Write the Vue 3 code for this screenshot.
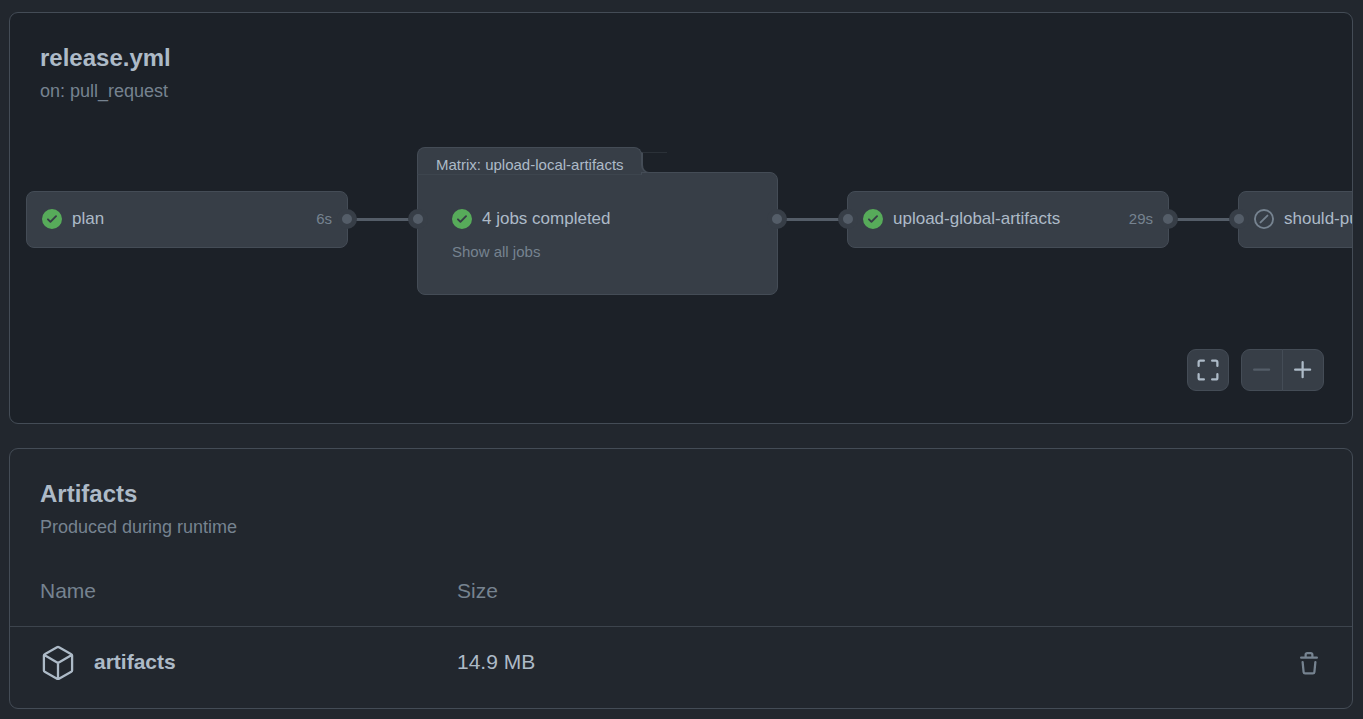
<script setup>
const check =
  'M8 16A8 8 0 1 1 8 0a8 8 0 0 1 0 16Zm3.78-9.72a.751.751 0 0 0-.018-1.042.751.751 0 0 0-1.042-.018L6.75 9.19 5.28 7.72a.751.751 0 0 0-1.042.018.751.751 0 0 0-.018 1.042l2 2a.75.75 0 0 0 1.06 0Z'
const skip =
  'M8 0a8 8 0 1 1 0 16A8 8 0 0 1 8 0ZM1.5 8a6.5 6.5 0 1 0 13 0 6.5 6.5 0 0 0-13 0Zm9.78-2.22-5.5 5.5a.749.749 0 0 1-1.275-.326.749.749 0 0 1 .215-.734l5.5-5.5a.751.751 0 0 1 1.042.018.751.751 0 0 1 .018 1.042Z'
const jobs = [
  { type: 'job', name: 'plan', time: '6s', icon: check, next: true },
  { type: 'matrix', name: '4 jobs completed', title: 'Matrix: upload-local-artifacts', icon: check, prev: true, next: true },
  { type: 'job', name: 'upload-global-artifacts', time: '29s', icon: check, prev: true, next: true },
  { type: 'job', name: 'should-publish', time: '', icon: skip, prev: true, skipped: true },
]
const artifacts = [{ name: 'artifacts', size: '14.9 MB' }]
</script>

<template>
  <main class="page">
    <section class="card graph-card">
      <header class="head">
        <h2>release.yml</h2>
        <p>on: pull_request</p>
      </header>
      <div class="graph">
        <template v-for="(job, i) in jobs" :key="job.name">
          <div v-if="i > 0" class="edge"></div>
          <div class="node" :class="job.type">
            <div v-if="job.title" class="tab">{{ job.title }}</div>
            <div class="body">
              <span v-if="job.prev" class="port left"></span>
              <span v-if="job.next" class="port right"></span>
              <div class="row">
                <svg class="status" :class="{ skipped: job.skipped }" viewBox="0 0 16 16" aria-hidden="true">
                  <path :d="job.icon" />
                </svg>
                <span class="name">{{ job.name }}</span>
                <span v-if="job.time" class="time">{{ job.time }}</span>
              </div>
              <button v-if="job.title" class="show" type="button">Show all jobs</button>
            </div>
          </div>
        </template>
      </div>
      <div class="controls">
        <button class="control full" type="button" aria-label="Full screen">
          <svg viewBox="0 0 16 16" aria-hidden="true">
            <path d="M1.75 10a.75.75 0 0 1 .75.75v2.5c0 .138.112.25.25.25h2.5a.75.75 0 0 1 0 1.5h-2.5A1.75 1.75 0 0 1 1 13.25v-2.5a.75.75 0 0 1 .75-.75Zm12.5 0a.75.75 0 0 1 .75.75v2.5A1.75 1.75 0 0 1 13.25 15h-2.5a.75.75 0 0 1 0-1.5h2.5a.25.25 0 0 0 .25-.25v-2.5a.75.75 0 0 1 .75-.75ZM2.75 2.5a.25.25 0 0 0-.25.25v2.5a.75.75 0 0 1-1.5 0v-2.5C1 1.784 1.784 1 2.75 1h2.5a.75.75 0 0 1 0 1.5h-2.5ZM10 1.75a.75.75 0 0 1 .75-.75h2.5c.966 0 1.75.784 1.75 1.75v2.5a.75.75 0 0 1-1.5 0v-2.5a.25.25 0 0 0-.25-.25h-2.5a.75.75 0 0 1-.75-.75Z" />
          </svg>
        </button>
        <div class="zoom">
          <button class="control out" type="button" aria-label="Zoom out" disabled>
            <svg viewBox="0 0 16 16" aria-hidden="true">
              <path d="M2 7.75A.75.75 0 0 1 2.75 7h10a.75.75 0 0 1 0 1.5h-10A.75.75 0 0 1 2 7.75Z" />
            </svg>
          </button>
          <button class="control in" type="button" aria-label="Zoom in">
            <svg viewBox="0 0 16 16" aria-hidden="true">
              <path d="M7.75 2a.75.75 0 0 1 .75.75V7h4.25a.75.75 0 0 1 0 1.5H8.5v4.25a.75.75 0 0 1-1.5 0V8.5H2.75a.75.75 0 0 1 0-1.5H7V2.75A.75.75 0 0 1 7.75 2Z" />
            </svg>
          </button>
        </div>
      </div>
    </section>

    <section class="card">
      <header class="head">
        <h2>Artifacts</h2>
        <p>Produced during runtime</p>
      </header>
      <table>
        <thead>
          <tr>
            <th class="col-name" scope="col">Name</th>
            <th scope="col">Size</th>
            <td class="col-action"></td>
          </tr>
        </thead>
        <tbody>
          <tr v-for="item in artifacts" :key="item.name">
            <td>
              <div class="artifact">
                <svg class="cube" viewBox="0 0 36 36" aria-hidden="true">
                  <path d="M17 3.300a2 2 0 0 1 2 0L31.300 10.300a1.500 1.500 0 0 1 .8 1.400V26.300a1.500 1.500 0 0 1-.8 1.400L19 34.700a2 2 0 0 1-2 0L4.700 27.700a1.500 1.500 0 0 1-.8-1.400V11.700a1.500 1.500 0 0 1 .8-1.400ZM4.300 11 18 19 31.700 11M18 19V34.500" />
                </svg>
                <a href="#">{{ item.name }}</a>
              </div>
            </td>
            <td>{{ item.size }}</td>
            <td class="action">
              <button class="delete" type="button" aria-label="Delete artifact">
                <svg viewBox="0 0 16 16" aria-hidden="true">
                  <path d="M11 1.75V3h2.25a.75.75 0 0 1 0 1.5H2.75a.75.75 0 0 1 0-1.5H5V1.75C5 .784 5.784 0 6.75 0h2.5C10.216 0 11 .784 11 1.75ZM4.496 6.675l.66 6.6a.25.25 0 0 0 .249.225h5.19a.25.25 0 0 0 .249-.225l.66-6.6a.75.75 0 0 1 1.492.149l-.66 6.6A1.748 1.748 0 0 1 10.595 15h-5.19a1.75 1.75 0 0 1-1.741-1.575l-.66-6.6a.75.75 0 1 1 1.492-.15ZM6.5 1.75V3h3V1.75a.25.25 0 0 0-.25-.25h-2.5a.25.25 0 0 0-.25.25Z" />
                </svg>
              </button>
            </td>
          </tr>
        </tbody>
      </table>
    </section>
  </main>
</template>

<style>
body {
  background: #22272e;
}
</style>

<style scoped>
* {
  box-sizing: border-box;
}
.page {
  display: flex;
  flex-direction: column;
  gap: 24px;
  padding: 12px 10px 10px 9px;
  font-family: "Liberation Sans", Arial, sans-serif;
  font-size: 21px;
  color: #adbac7;
}
button {
  margin: 0;
  padding: 0;
  border: 0;
  background: none;
  font: inherit;
  color: inherit;
}
svg {
  display: block;
  fill: currentColor;
}
.card {
  border: 1px solid #444c56;
  border-radius: 9px;
  overflow: hidden;
}
.graph-card {
  background: #1c2128;
}
.head {
  padding: 27px 30px 0;
}
h2 {
  margin: 0;
  font-size: 24px;
  line-height: 36px;
}
p {
  margin: 0;
  font-size: 18px;
  line-height: 30px;
  color: #768390;
}
.graph {
  display: flex;
  align-items: flex-start;
  padding: 41px 0 0 16px;
}
.node {
  flex: none;
}
.job {
  width: 322px;
  padding-top: 44px;
}
.matrix {
  width: 361px;
}
.body {
  position: relative;
  border: 1px solid #444c56;
  border-radius: 8px;
  background: #373e47;
}
.job .body {
  padding: 0 15px 1px;
}
.matrix .body {
  height: 123px;
  padding: 19px 34px;
  border-top-left-radius: 0;
}
.tab {
  position: relative;
  z-index: 1;
  width: 225px;
  height: 28px;
  margin-bottom: -3px;
  padding-left: 18px;
  border: 1px solid #444c56;
  border-bottom-color: #3d454e;
  border-radius: 8px 8px 0 0;
  background: #373e47;
  font-size: 15px;
  line-height: 34px;
  white-space: nowrap;
}
/* Inner corner where the tab meets the body */
.tab::before,
.tab::after {
  content: "";
  position: absolute;
  left: 223px;
}
.tab::before {
  top: 16px;
  width: 8px;
  height: 8px;
  background: #373e47;
}
.tab::after {
  box-sizing: border-box;
  top: 4px;
  width: 26px;
  height: 21px;
  border: 1px solid #444c56;
  border-width: 1px 0 1px 2px;
  border-top-color: #2b3138;
  border-bottom-left-radius: 8px;
  background: #1c2128;
}
.row {
  display: flex;
  align-items: center;
  gap: 10px;
  height: 54px;
  font-size: 17px;
  white-space: nowrap;
}
.status {
  flex: none;
  width: 20px;
  height: 20px;
  color: #57ab5a;
}
.skipped {
  color: #768390;
}
.name {
  flex: 1;
}
.time {
  padding-bottom: 2px;
  font-size: 15px;
  color: #768390;
}
.show {
  display: block;
  font-size: 15px;
  line-height: 12px;
  color: #768390;
}
.edge {
  flex: none;
  width: 69px;
  height: 3px;
  margin-top: 71px;
  background: #545d68;
}
.port {
  position: absolute;
  z-index: 1;
  width: 20px;
  height: 20px;
  border: 5px solid #373e47;
  border-radius: 50%;
  background: #545d68;
}
.job .port {
  top: 17px;
}
.matrix .port {
  top: 36px;
}
.left {
  left: -10px;
}
.right {
  right: -10px;
}
.controls {
  display: flex;
  justify-content: flex-end;
  gap: 12px;
  padding: 54px 28px 32px;
}
.control {
  display: grid;
  place-items: center;
  width: 42px;
  height: 42px;
  border: 1px solid #444c56;
  border-radius: 9px;
  background: #373e47;
}
.control svg,
.delete svg {
  width: 24px;
  height: 24px;
}
.zoom {
  display: flex;
}
.out {
  border-radius: 9px 0 0 9px;
  color: #545d68;
}
.in {
  margin-left: -1px;
  border-radius: 0 9px 9px 0;
}
table {
  width: 100%;
  margin-top: 22px;
  border-collapse: collapse;
  table-layout: fixed;
}
th,
td {
  padding: 0;
  text-align: left;
}
th {
  height: 62px;
  padding-bottom: 8px;
  font-weight: 400;
  color: #768390;
}
.col-name {
  width: 447px;
}
th:first-child,
tbody td:first-child {
  padding-left: 30px;
}
.col-action {
  width: 55px;
}
tbody tr {
  border-top: 1px solid #3d444d;
}
tbody td {
  height: 82px;
  padding-bottom: 10px;
}
tbody .action {
  padding-bottom: 2px;
}
.delete {
  color: #768390;
}
.artifact {
  display: flex;
  align-items: center;
  gap: 18px;
}
.cube {
  width: 36px;
  height: 36px;
  fill: none;
  stroke: currentColor;
  stroke-width: 2.3;
  stroke-linejoin: round;
}
a {
  font-weight: 700;
  color: inherit;
  text-decoration: none;
}
</style>
